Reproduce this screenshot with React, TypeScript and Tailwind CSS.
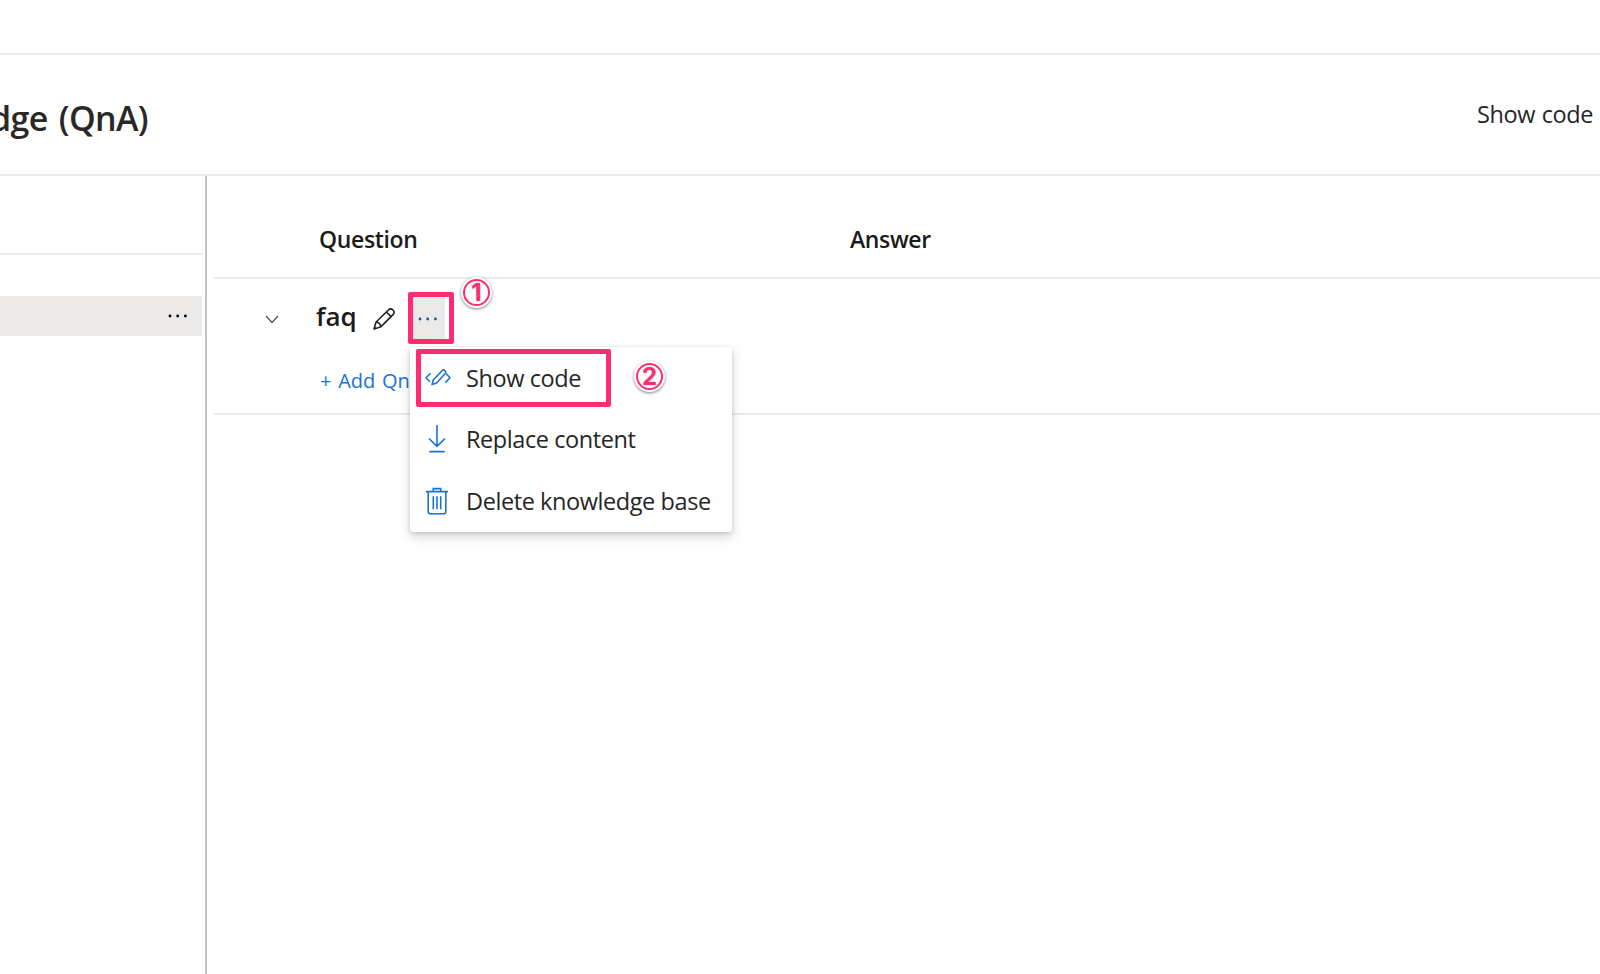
import React from "react";

const rule = "border-[#eaeaea]";

function Dots({ className }: { className: string }) {
  return (
    <svg width="20" height="4" viewBox="0 0 20 4" fill="currentColor" className={className}>
      <circle cx="2" cy="2" r="1.4" />
      <circle cx="9.7" cy="2" r="1.4" />
      <circle cx="17.4" cy="2" r="1.4" />
    </svg>
  );
}

function Pencil() {
  return (
    <svg width="22" height="22" viewBox="0 0 22 22" fill="none" stroke="#1b1b1b" strokeWidth="1.5" strokeLinejoin="round">
      <path d="M1 21 L3.1 14 L15.4 2 A3.2 3.2 0 0 1 20 6.6 L7.8 18.9 Z" />
      <path d="M13.4 4 L18 8.6 M3.1 14 C5.6 14.3 7.5 16.2 7.8 18.9 M1.4 19.2 L2.8 20.6" />
    </svg>
  );
}

function CodeEdit() {
  return (
    <svg width="26" height="18" viewBox="0 0 26 18" fill="none" stroke="#1a73d2" strokeWidth="1.6" strokeLinejoin="round">
      <path d="M5.6 4.2 L1 8.8 L4.8 12.8 M21.2 4.8 L25 8.8 L20.4 13.6" />
      <path d="M7 15.6 L8.4 10.8 L17 1.7 A2 2 0 0 1 20 4.7 L11.6 14 Z" />
    </svg>
  );
}

function Download() {
  return (
    <svg width="18" height="28" viewBox="0 0 18 28" fill="none" stroke="#1a73d2" strokeWidth="1.6">
      <path d="M9 0 V21 M1 13.5 L9 21.3 L17 13.5 M1.3 26.6 H16.7" />
    </svg>
  );
}

function Trash() {
  return (
    <svg width="22" height="28" viewBox="0 0 22 28" fill="none" stroke="#1a73d2" strokeWidth="1.6">
      <path d="M0 4.6 H22 M7.3 4.6 V1.6 H14.7 V4.6 M2.2 4.6 V24.5 Q2.2 26.8 4.5 26.8 H17.5 Q19.8 26.8 19.8 24.5 V4.6" />
      <path d="M7.3 9.3 V22.3 M11 9.3 V22.3 M14.7 9.3 V22.3" />
    </svg>
  );
}

function Step({ n, className }: { n: string; className: string }) {
  return (
    <div className={`absolute z-30 flex size-[31px] items-center justify-center rounded-full bg-white tracking-normal shadow-[0_1px_3px_rgba(0,0,0,0.5)] ${className}`}>
      <div className="flex size-[27px] items-center justify-center rounded-full border-2 border-[#ff2d6f]">
        <span className="font-['Inter','Liberation_Sans',sans-serif] text-[24px] leading-none font-bold text-[#ff2d6f] [text-shadow:0_0_2px_rgba(0,0,0,0.25)]">{n}</span>
      </div>
    </div>
  );
}

export default function App() {
  return (
    <div className="flex h-[974px] w-[1600px] flex-col overflow-hidden bg-white font-['Open_Sans','Noto_Sans',sans-serif] text-[#1b1b1b]">
      <div className={`h-[55px] shrink-0 border-b-2 ${rule}`} />
      <header className={`flex h-[121px] shrink-0 items-start justify-between border-b-2 pr-[7px] ${rule}`}>
        <div className="flex w-[148px] justify-end pt-[39px]">
          <h1 className="text-[34px] leading-[48px] font-semibold whitespace-nowrap tracking-[-0.65px] [word-spacing:3px] text-[#292827]">Knowledge (QnA)</h1>
        </div>
        <span className="pt-[43px] text-[23.5px] leading-[32px] tracking-[-0.42px] [word-spacing:1px] whitespace-nowrap text-[#262626]">Show code</span>
      </header>
      <div className="flex min-h-0 flex-1">
        <aside className="w-[202px] shrink-0">
          <div className={`h-[79px] border-b-2 ${rule}`} />
          <div className="mt-[41px] flex h-[40px] items-center justify-end bg-[#ebeae9] pr-[14px]">
            <Dots className="text-black" />
          </div>
        </aside>
        <div className="ml-[3px] w-[2px] shrink-0 bg-[#c4c4c4]" />
        <main className="ml-[7px] flex-1">
          <div className={`flex h-[103px] border-b-2 pt-[46px] text-[23px] leading-[34px] font-semibold tracking-[-0.35px] ${rule}`}>
            <span className="w-[530px] pl-[105px]">Question</span>
            <span className="pl-[106px]">Answer</span>
          </div>
          <div className={`relative h-[136px] border-b-2 ${rule}`}>
            <div className="flex h-[80px] items-center pl-[51px]">
              <svg width="14" height="9" viewBox="0 0 14 9" fill="none" stroke="#555" strokeWidth="1.3"><path d="M1 1 L7 7.5 L13 1" /></svg>
              <span className="ml-[37px] w-[57px] pb-[6px] text-[26px] leading-[36px] font-semibold">faq</span>
              <Pencil />
            </div>
            <div className="pl-[106px] text-[20px] leading-[28px] [word-spacing:1.5px] text-[#1a73d2] pt-[8px]">+ Add QnA pair</div>
            <div className="absolute top-[13px] left-[194px] z-20 h-[52px] w-[46px] rounded-[2px] border-[5px] border-[#ff2d6f]">
              <div className="flex h-full w-[32px] items-center justify-center bg-[#ebeae9] pt-[2px] pr-[2px]">
                <Dots className="text-[#15539e]" />
              </div>
            </div>
            <Step n="1" className="top-[-2px] left-[247px]" />
            <div className="absolute top-[68px] left-[196px] z-10 w-[322px] rounded-[3px] bg-white text-[23.5px] leading-[32px] tracking-[-0.42px] text-[#262626] shadow-[0_5px_12px_rgba(0,0,0,0.16),0_1px_4px_rgba(0,0,0,0.14)]">
              <div className="relative flex h-[61px] items-center pl-[15px]">
                <CodeEdit />
                <span className="ml-[15px]">Show code</span>
                <div className="absolute top-[2px] left-[6px] h-[58px] w-[195px] rounded-[2px] border-[5px] border-[#ff2d6f]" />
                <Step n="2" className="top-[14px] left-[224px]" />
              </div>
              <div className="flex h-[62px] items-center pl-[18px]">
                <Download />
                <span className="ml-[20px]">Replace content</span>
              </div>
              <div className="flex h-[62px] items-center pl-[16px]">
                <Trash />
                <span className="ml-[18px]">Delete knowledge base</span>
              </div>
            </div>
          </div>
        </main>
      </div>
    </div>
  );
}
